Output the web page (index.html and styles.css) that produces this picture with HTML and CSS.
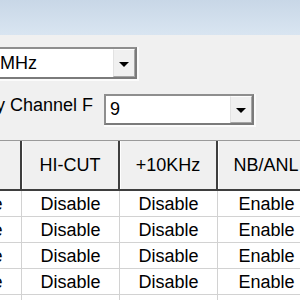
FILE: index.html
```html
<!DOCTYPE html>
<html lang="en">
<head>
    <meta charset="UTF-8">
    <title>Channel Settings</title>
    <link rel="stylesheet" href="styles.css">
</head>
<body>
    <div class="titlebar"></div>

    <div class="panel">
        <div class="row row-freq">
            <div class="combo combo-freq">
                <span class="combo-value">MHz</span>
                <span class="combo-button"><i class="arrow"></i></span>
            </div>
        </div>

        <div class="row row-channel">
            <label class="field-label">y Channel F</label>
            <div class="combo combo-channel">
                <span class="combo-value">9</span>
                <span class="combo-button"><i class="arrow"></i></span>
            </div>
        </div>

        <div class="grid">
            <div class="cell head"></div>
            <div class="cell head">HI-CUT</div>
            <div class="cell head">+10KHz</div>
            <div class="cell head">NB/ANL</div>

            <div class="cell">Disable</div>
            <div class="cell">Disable</div>
            <div class="cell">Disable</div>
            <div class="cell">Enable</div>

            <div class="cell">Disable</div>
            <div class="cell">Disable</div>
            <div class="cell">Disable</div>
            <div class="cell">Enable</div>

            <div class="cell">Disable</div>
            <div class="cell">Disable</div>
            <div class="cell">Disable</div>
            <div class="cell">Enable</div>

            <div class="cell">Disable</div>
            <div class="cell">Disable</div>
            <div class="cell">Disable</div>
            <div class="cell">Enable</div>

            <div class="cell"></div>
            <div class="cell"></div>
            <div class="cell"></div>
            <div class="cell"></div>
        </div>
    </div>
</body>
</html>
```

FILE: styles.css
```css
body {
    margin: 0;
    background-color: #f0f0f0;
    font-family: "Liberation Sans", Arial, sans-serif;
    font-size: 18px;
    color: #000;
    overflow: hidden;
    width: 300px;
    height: 300px;
}
.titlebar {
    height: 35px;
    background: linear-gradient(#c8d7e7, #d9e5f1);
}
.panel {
    padding-top: 12px;
}
.row {
    display: flex;
    align-items: center;
}
.row-channel {
    margin-top: 15px;
    gap: 11px;
}
.field-label {
    width: 93px;
    display: flex;
    justify-content: flex-end;
    white-space: nowrap;
    margin-top: -8px;
}
.combo {
    display: flex;
    box-sizing: border-box;
    background: #fff;
    border: 2px solid #7b7b7b;
    border-top-color: #8e8e8e;
    border-left-color: #8e8e8e;
    box-shadow: 1px 1px 0 1px #fbfbfb;
}
.combo-freq {
    margin-left: -6px;
    width: 143px;
    height: 32px;
}
.combo-channel {
    width: 150px;
    height: 31px;
}
.combo-value {
    flex: 1;
    display: flex;
    align-items: center;
    padding-left: 4px;
}
.combo-button {
    width: 22px;
    display: flex;
    align-items: center;
    justify-content: center;
    box-sizing: border-box;
    background: #f0f0f0;
    border: 1px solid;
    border-color: #fdfdfd #a5a5a5 #a5a5a5 #e2e2e2;
}
.arrow {
    width: 0;
    height: 0;
    border-left: 5px solid transparent;
    border-right: 5px solid transparent;
    border-top: 5px solid #000;
    margin-top: 2px;
}
.grid {
    display: grid;
    grid-template-columns: repeat(4, 98px);
    grid-template-rows: 50px;
    grid-auto-rows: 26px;
    margin-top: 15px;
    margin-left: -76px;
    border-top: 1px solid #9a9a9a;
    background: #fff;
}
.cell {
    box-sizing: border-box;
    display: flex;
    align-items: center;
    justify-content: center;
    white-space: nowrap;
    padding-top: 1px;
    border-right: 1px solid #d2d2d2;
    border-bottom: 1px solid #d2d2d2;
}
.head {
    background: #f0f0f0;
    border-right: 2px solid #3e3e3e;
    border-bottom: 2px solid #3e3e3e;
    box-shadow: inset 1px 0 0 #fff;
}
```
